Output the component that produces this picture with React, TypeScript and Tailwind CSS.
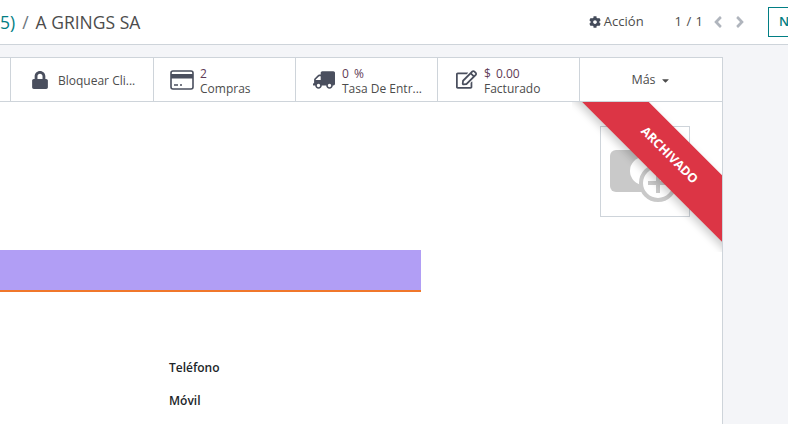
import { FaAngleLeft, FaAngleRight, FaCaretDown, FaCog, FaLock, FaRegEdit, FaTruck } from 'react-icons/fa';

const StatButton = ({ icon, value, label, width }: { icon: React.ReactNode; value: string; label: string; width: string }) => (
  <div className={`flex items-center border-r border-[#ced4da] pl-[13px] ${width}`}>
    <div className="flex w-[30px] shrink-0 justify-center text-[#4a4f5e]">{icon}</div>
    <div className="mt-[2px] flex flex-col pl-[3px] text-[12px] leading-[15px] text-[#4c4c4c]">
      <span className="text-[#5f3b56] [word-spacing:2px]">{value}</span>
      <span>{label}</span>
    </div>
  </div>
);

const CardIcon = () => (
  <svg width="24" height="20" viewBox="0 0 24 20" fill="none">
    <rect x="1" y="1" width="22" height="18" rx="2" stroke="currentColor" strokeWidth="1.6" />
    <rect x="1" y="4" width="22" height="4.5" fill="currentColor" />
    <path d="M4 15h4M10 15h2" stroke="currentColor" strokeWidth="1.4" />
  </svg>
);

export default function App() {
  return (
    <div className="h-[424px] w-[788px] overflow-hidden bg-[#f4f5f8] font-['Open_Sans',sans-serif]">
      <header className="flex h-[45px] items-center justify-between border-b border-[#ced4da] bg-white">
        <div className="text-[17.5px] text-[#4c4c4c]">
          <span className="text-[#017e84]">5)</span>
          <span className="mx-[7px] text-[#6c757d]">/</span>
          <span>A GRINGS SA</span>
        </div>
        <div className="flex items-center text-[#4c4c4c]">
          <FaCog className="text-[12px] text-[#444b5a]" />
          <span className="ml-[3px] text-[13px] font-medium">Acción</span>
          <span className="ml-[31px] text-[13px] [word-spacing:1px]">1 / 1</span>
          <FaAngleLeft className="ml-[6px] text-[18px] text-[#b0b5bd]" />
          <FaAngleRight className="ml-[4px] text-[18px] text-[#b0b5bd]" />
          <div className="ml-[19px] flex h-[30px] w-[20px] items-center border border-r-0 border-[#017e84] pl-[10px] text-[13px] font-semibold text-[#017e84]">
            N
          </div>
        </div>
      </header>

      <main className="relative mt-[12px] h-[400px] w-[723px] border-r border-t border-[#ced4da] bg-white">
        <div className="flex h-[44px] border-b border-[#ced4da]">
          <div className="w-[11px] border-r border-[#ced4da]" />
          <div className="flex w-[143px] items-center border-r border-[#ced4da] pl-[20px]">
            <FaLock className="text-[18px] text-[#4a4f5e]" />
            <span className="ml-[9px] mt-[2px] text-[12px] text-[#4c4c4c]">Bloquear Cli...</span>
          </div>
          <StatButton width="w-[142px]" icon={<CardIcon />} value="2" label="Compras" />
          <StatButton width="w-[142px]" icon={<FaTruck className="-scale-x-100 text-[22px]" />} value="0 %" label="Tasa De Entr..." />
          <StatButton width="w-[142px]" icon={<FaRegEdit className="text-[21px]" />} value="$ 0.00" label="Facturado" />
          <div className="mt-[2px] flex flex-1 items-center justify-center text-[12.5px] font-medium text-[#4c4c4c]">
            Más
            <FaCaretDown className="ml-[4px] text-[11px]" />
          </div>
        </div>

        <div className="relative">
          <div className="absolute right-[32px] top-[24px] flex h-[91px] w-[90px] items-center justify-center border border-[#ced4da]">
            <svg width="70" height="54" viewBox="0 0 70 54" className="mt-[11px]">
              <rect x="0" y="0" width="48" height="42" rx="6" fill="#c9c9c9" />
              <circle cx="34" cy="21" r="14" fill="#ffffff" />
              <circle cx="48" cy="33" r="17" fill="#ffffff" stroke="#c9c9c9" strokeWidth="4" />
              <path d="M48 23v20M38 33h20" stroke="#c9c9c9" strokeWidth="4" />
            </svg>
          </div>
          <div className="absolute right-0 top-0 h-[150px] w-[150px] overflow-hidden">
            <div className="absolute left-[-53px] top-[30px] flex h-[47px] w-[300px] rotate-45 items-center justify-center bg-[#dc3545] text-[12.5px] font-bold text-white shadow-[0_4px_8px_rgba(0,0,0,0.2)]">
              ARCHIVADO
            </div>
          </div>

          <div className="pt-[148px]">
            <div className="h-[42px] w-[421px] border-b-2 border-[#f0772b] bg-[#b19ef5]" />
          </div>
          <div className="flex flex-col gap-[15px] pl-[169px] pt-[67px] text-[12px] font-semibold leading-[18px] text-[#212529]">
            <span>Teléfono</span>
            <span>Móvil</span>
          </div>
        </div>
      </main>
    </div>
  );
}
